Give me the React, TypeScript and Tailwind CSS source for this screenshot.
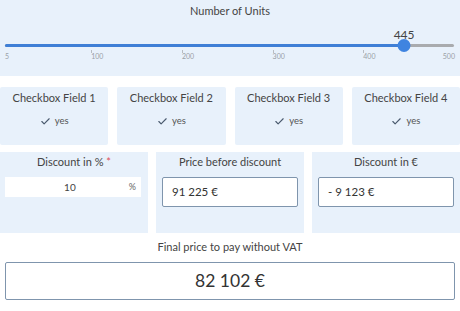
import { Check } from "lucide-react"

const ticks = [
  { v: 5, label: "5" },
  { v: 100, label: "100" },
  { v: 200, label: "200" },
  { v: 300, label: "300" },
  { v: 400, label: "400" },
  { v: 500, label: "500" },
]

const MIN = 5
const MAX = 500
const VALUE = 445
const TRACK_LEFT = 5
const TRACK_WIDTH = 449

function pos(v: number) {
  return TRACK_LEFT + ((v - MIN) / (MAX - MIN)) * TRACK_WIDTH
}

function UnitsSlider() {
  const x = pos(VALUE)
  return (
    <div className="relative h-[52px]">
      {/* value bubble */}
      <div
        className="absolute top-[9px] -translate-x-1/2 text-[12px] leading-[14px] text-[#444]"
        style={{ left: x }}
      >
        {VALUE}
      </div>
      {/* track */}
      <div className="absolute top-[25px] left-[5px] w-[449px] h-[3px] rounded-full bg-[#a9abae]" />
      <div
        className="absolute top-[25px] left-[5px] h-[3px] rounded-full bg-[#3f7fd6]"
        style={{ width: x - TRACK_LEFT }}
      />
      {/* thumb */}
      <div
        className="absolute top-[20px] w-[13px] h-[13px] -translate-x-1/2 rounded-full bg-[#3f84e0]"
        style={{ left: x }}
      />
      {ticks.map((t) => (
        <div key={t.v}>
          {t.v !== MIN && t.v !== MAX && (
            <div className="absolute top-[31px] w-px h-[3px] bg-[#b8bcc2]" style={{ left: pos(t.v) }} />
          )}
          <div
            className={
              "absolute top-[33px] text-[7px] leading-[8px] text-[#9aa0a6] " +
              (t.v === MAX ? "-translate-x-full" : "")
            }
            style={{ left: t.v === MAX ? 455 : pos(t.v) }}
          >
            {t.label}
          </div>
        </div>
      ))}
    </div>
  )
}

function CheckboxCard({ label }: { label: string }) {
  return (
    <div className="flex-1 h-[58px] bg-[#e8f1fb] rounded-[2px] flex flex-col items-center">
      <div className="mt-[3px] text-[11px] leading-[16px] text-[#444]">{label}</div>
      <div className="mt-[9px] flex items-center gap-[4px] text-[9.5px] leading-[12px] text-[#555]">
        <Check size={11} strokeWidth={2.5} className="text-[#4a5a6e]" />
        yes
      </div>
    </div>
  )
}

export default function App() {
  return (
    <div className="w-[460px] h-[311px] bg-white font-['Lato',sans-serif] text-[#444] overflow-hidden">
      <div className="h-[76px] bg-[#e8f1fb] pt-[3px]">
        <div className="text-center text-[11px] leading-[16px]">Number of Units</div>
        <UnitsSlider />
      </div>

      <div className="mt-[11px] flex gap-[9px]">
        <CheckboxCard label="Checkbox Field 1" />
        <CheckboxCard label="Checkbox Field 2" />
        <CheckboxCard label="Checkbox Field 3" />
        <CheckboxCard label="Checkbox Field 4" />
      </div>

      <div className="mt-[7px] grid grid-cols-3 gap-[8px]">
        <div className="h-[81px] bg-[#e8f1fb] pt-[2px] px-[5px]">
          <div className="text-center text-[11px] leading-[16px]">
            Discount in % <span className="text-[#e0505a]">*</span>
          </div>
          <div className="mt-[7px] h-[20px] w-[136px] bg-white flex items-center text-[10px] text-[#444]">
            <span className="flex-1 text-center pl-[6px]">10</span>
            <span className="pr-[5px] text-[9px] text-[#666]">%</span>
          </div>
        </div>
        <div className="h-[81px] bg-[#e8f1fb] pt-[2px] px-[6px]">
          <div className="text-center text-[11px] leading-[16px]">Price before discount</div>
          <div className="mt-[7px] h-[30px] w-[136px] bg-white border border-[#7f95ad] rounded-[2px] flex items-center px-[9px] text-[11.5px] text-[#333]">
            91 225 €
          </div>
        </div>
        <div className="h-[81px] bg-[#e8f1fb] pt-[2px] px-[6px]">
          <div className="text-center text-[11px] leading-[16px]">Discount in €</div>
          <div className="mt-[7px] h-[30px] w-[136px] bg-white border border-[#7f95ad] rounded-[2px] flex items-center px-[9px] text-[11.5px] text-[#333]">
            - 9 123 €
          </div>
        </div>
      </div>

      <div className="mt-[7px] text-center text-[11px] leading-[14px] text-[#444]">
        Final price to pay without VAT
      </div>
      <div className="mt-[8px] mx-[5px] h-[38px] border border-[#7f95ad] rounded-[2px] flex items-center justify-center text-[17.5px] text-[#333]">
        82 102 €
      </div>
    </div>
  )
}
